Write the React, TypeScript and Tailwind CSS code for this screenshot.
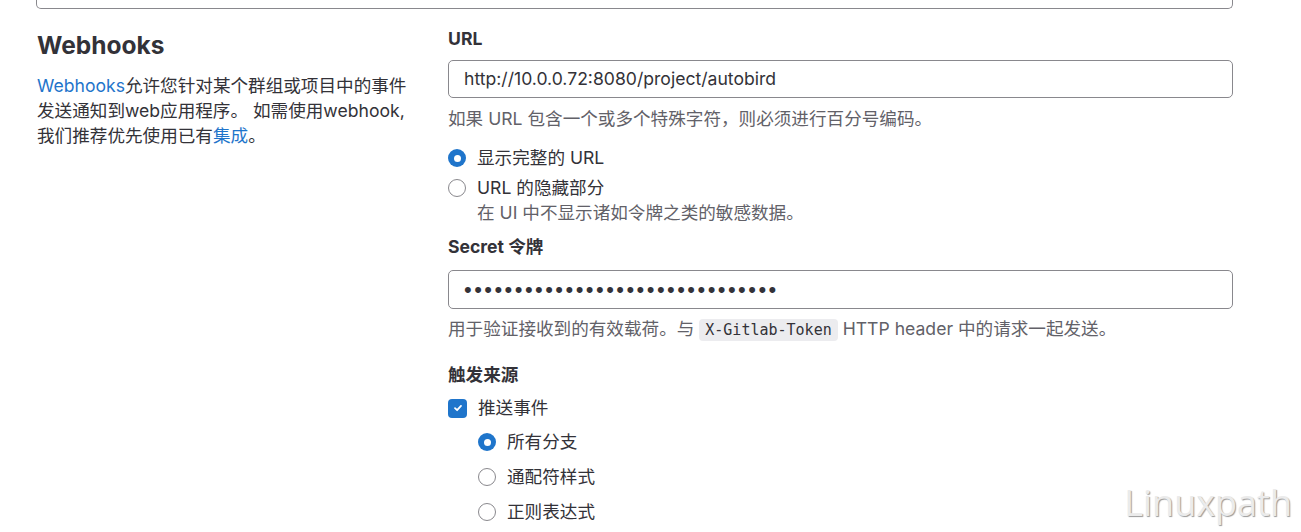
import React from 'react';

const Radio = ({ checked }: { checked?: boolean }) =>
  checked ? (
    <span className="w-[18px] h-[18px] shrink-0 rounded-full bg-[#1f75cb] flex items-center justify-center">
      <span className="w-[7px] h-[7px] rounded-full bg-white" />
    </span>
  ) : (
    <span className="block w-[18px] h-[18px] shrink-0 rounded-full border border-[#89888d] bg-white" />
  );

const Checkbox = () => (
  <span className="w-[19px] h-[19px] shrink-0 rounded-[4px] bg-[#1f75cb] flex items-center justify-center">
    <svg width="10" height="10" viewBox="0 0 10 10" fill="none">
      <path d="M2 5.2 L4.1 7.2 L8 2.9" stroke="white" strokeWidth="1.8" strokeLinecap="round" strokeLinejoin="round" />
    </svg>
  </span>
);

const WebhookSettings = () => {
  return (
    <div className="relative min-h-screen overflow-hidden bg-white text-[#333238] font-[Inter,'Noto_Sans_CJK_SC',sans-serif]">
      <div className="pl-[36px] pr-[68px]">
        {/* bottom of the field above */}
        <div className="h-[9px] border-x border-b border-[#89888d] rounded-b-[5px]" />

        <div className="flex pt-[18px]">
          <div className="w-[412px] shrink-0 pl-px">
            <h2 className="mt-[2px] text-[24.5px] leading-[32px] font-bold">Webhooks</h2>
            <p className="mt-[12px] text-[17.6px] leading-[25px]">
              <a className="text-[#1f75cb]">Webhooks</a>允许您针对某个群组或项目中的事件
              <br />
              发送通知到web应用程序。 如需使用webhook,
              <br />
              我们推荐优先使用已有<a className="text-[#1f75cb]">集成</a>。
            </p>
          </div>

          <div className="flex-1 text-[17.6px] leading-[24px]">
            <div className="font-bold">URL</div>
            <div className="mt-[9px] h-[38px] border border-[#89888d] rounded-[5px] flex items-center px-[15px]">
              http://10.0.0.72:8080/project/autobird
            </div>
            <div className="mt-[9px] text-[#626168]">如果 URL 包含一个或多个特殊字符，则必须进行百分号编码。</div>

            <div className="mt-[15px] flex items-center gap-[11px]">
              <Radio checked />
              <span>显示完整的 URL</span>
            </div>
            <div className="mt-[6px] flex items-start gap-[11px]">
              <span className="block mt-[3px]">
                <Radio />
              </span>
              <div>
                <div>URL 的隐藏部分</div>
                <div className="text-[#626168] leading-[24px] mt-px">在 UI 中不显示诸如令牌之类的敏感数据。</div>
              </div>
            </div>

            <div className="mt-[10px] font-bold">Secret 令牌</div>
            <div className="mt-[11px] h-[39px] border border-[#89888d] rounded-[5px] flex items-center px-[15px]">
              <span className="font-['Liberation_Sans',sans-serif] text-[22px] tracking-[2.45px] text-[#333238]">
                {'•'.repeat(31)}
              </span>
            </div>
            <div className="mt-[8px] text-[#626168]">
              用于验证接收到的有效载荷。与{' '}
              <code className="bg-[#ececef] rounded-[4px] px-[6px] py-[2px] font-['DejaVu_Sans_Mono',monospace] text-[15px] text-[#333238]">
                X-Gitlab-Token
              </code>{' '}
              HTTP header 中的请求一起发送。
            </div>

            <div className="mt-[21px] font-bold">触发来源</div>
            <div className="mt-[9px] flex items-center gap-[11px]">
              <Checkbox />
              <span>推送事件</span>
            </div>
            <div className="ml-[30px] mt-[10px] flex flex-col gap-[11px]">
              <div className="flex items-center gap-[11px]">
                <Radio checked />
                <span>所有分支</span>
              </div>
              <div className="flex items-center gap-[11px]">
                <Radio />
                <span>通配符样式</span>
              </div>
              <div className="flex items-center gap-[11px]">
                <Radio />
                <span>正则表达式</span>
              </div>
            </div>
          </div>
        </div>
      </div>

      <div className="absolute right-[9px] bottom-[11px] font-['Open_Sans',sans-serif] text-[36px] leading-none text-[#ebebeb] [text-shadow:1px_1px_1px_#9a9a9a]">
        Linuxpath
      </div>
    </div>
  );
};

export default function App() {
  return <WebhookSettings />;
}
